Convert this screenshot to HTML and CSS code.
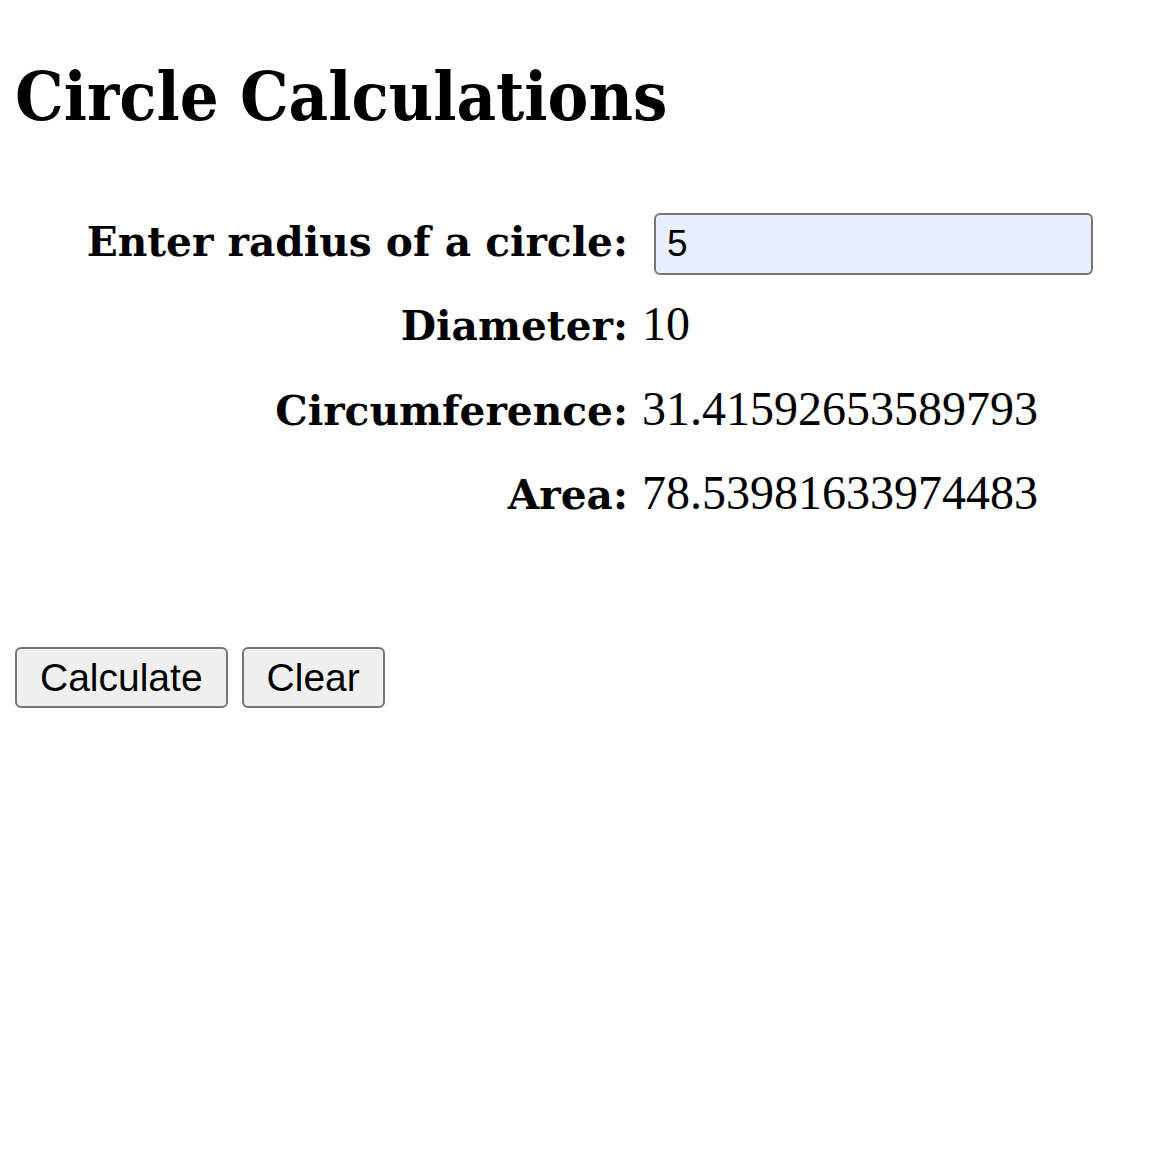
FILE: index.html
```html
<!DOCTYPE html>
<html lang="en">
<head>
<meta charset="utf-8">
<title>Circle Calculations</title>
<link rel="stylesheet" href="styles.css">
</head>
<body>
<main class="page">
  <h1 class="title">Circle Calculations</h1>
  <form class="calc">
    <div class="fields">
      <label class="label" for="radius">Enter radius of a circle:</label>
      <div class="value"><input class="radius" id="radius" type="text" value="5"></div>
      <span class="label">Diameter:</span>
      <span class="value">10</span>
      <span class="label">Circumference:</span>
      <span class="value">31.41592653589793</span>
      <span class="label">Area:</span>
      <span class="value">78.53981633974483</span>
    </div>
    <div class="actions">
      <button type="button" class="btn">Calculate</button>
      <button type="reset" class="btn">Clear</button>
    </div>
  </form>
</main>
</body>
</html>
```

FILE: styles.css
```css
html, body {
  margin: 0;
  padding: 0;
  background: #ffffff;
  color: #000000;
}

.page {
  padding: 14px 15px 0;
}

.title {
  margin: 41.5px 0 0;
  font-family: "DejaVu Serif Condensed", "DejaVu Serif", serif;
  font-stretch: condensed;
  font-weight: bold;
  font-size: 68px;
  line-height: 80px;
}

.calc {
  margin: 76px 0 0;
}

.fields {
  display: grid;
  grid-template-columns: 613px 1fr;
  column-gap: 14px;
  grid-auto-rows: 84.5px;
  align-items: baseline;
}

.label {
  justify-self: end;
  font-family: "DejaVu Serif", serif;
  font-weight: bold;
  font-size: 40.7px;
}

.value {
  font-family: "Liberation Serif", serif;
  font-size: 48px;
}

.radius {
  box-sizing: border-box;
  width: 439px;
  height: 62px;
  margin: 0 0 0 12px;
  padding: 0 11px;
  border: 2px solid #767676;
  border-radius: 6px;
  background: #e8f0fe;
  font-family: "Liberation Sans", Arial, sans-serif;
  font-size: 37px;
  color: #000000;
}

.actions {
  display: flex;
  gap: 14px;
  margin-top: 97px;
}

.btn {
  box-sizing: border-box;
  height: 61px;
  padding: 0 23px;
  border: 2px solid #767676;
  border-radius: 6px;
  background: #efefef;
  font-family: "Liberation Sans", Arial, sans-serif;
  font-size: 39px;
  line-height: 45px;
  color: #000000;
}
```
